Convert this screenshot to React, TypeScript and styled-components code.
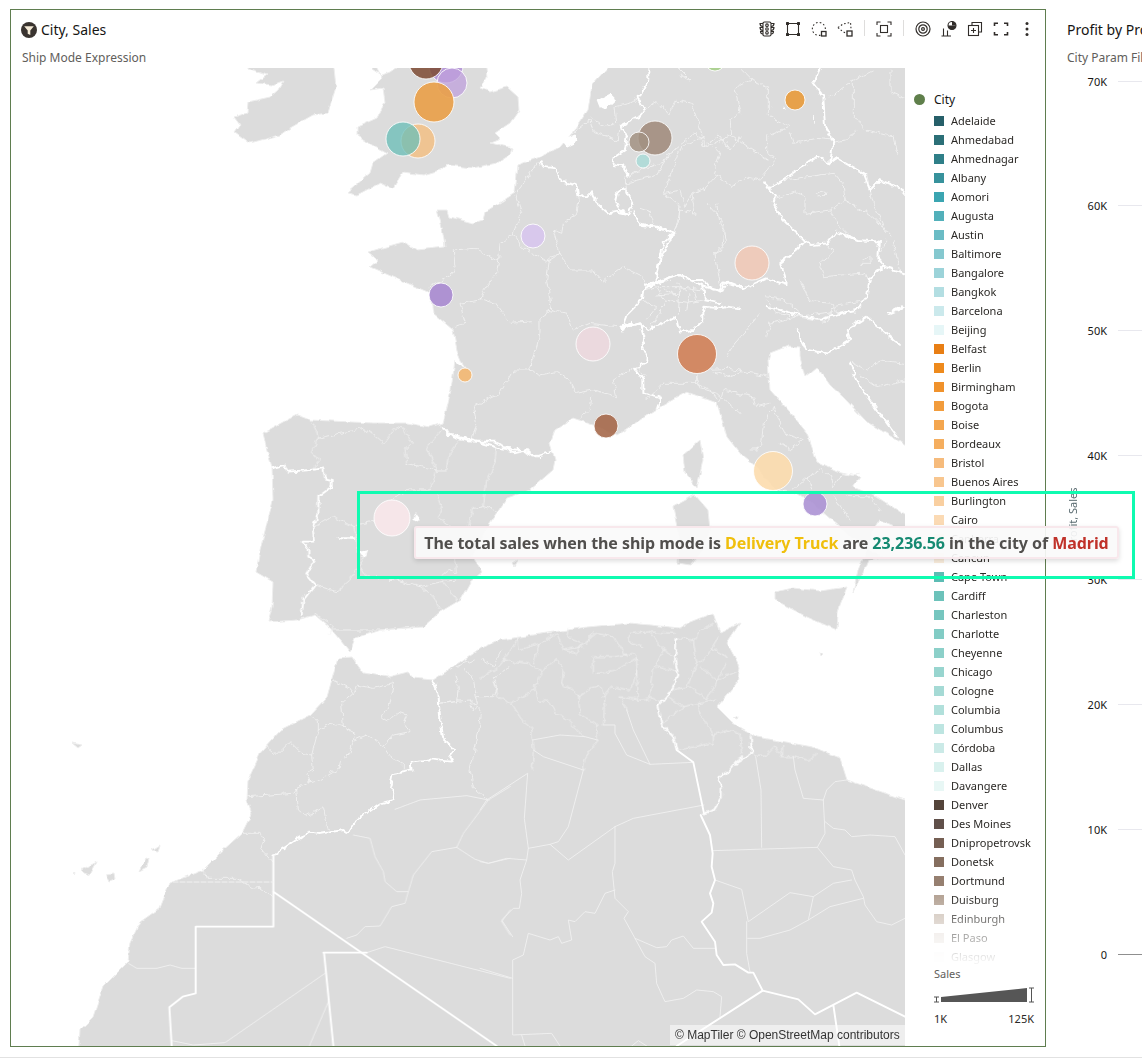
import React from "react";
import styled, { createGlobalStyle } from "styled-components";

const Global = createGlobalStyle`
  html, body { margin: 0; padding: 0; background: #fff; }
  body { font-family: "Noto Sans", "Open Sans", sans-serif; color: #161513; }
`;

const Page = styled.div`
  position: relative;
  width: 1142px;
  height: 1059px;
  overflow: hidden;
  display: flex;
  flex-direction: column;
  background: #fff;
`;
const Main = styled.main`
  flex: none;
  height: 1057px;
  display: flex;
  padding: 9px 0 0 10px;
  box-sizing: border-box;
`;
const FooterRule = styled.div`
  height: 1px;
  background: #e2e2e2;
`;
const Card = styled.section`
  flex: none;
  width: 1036px;
  height: 1038px;
  box-sizing: border-box;
  border: 1px solid #5f7d4f;
  display: flex;
  flex-direction: column;
`;
const CardHeader = styled.header`
  flex: none;
  height: 58px;
  box-sizing: border-box;
  padding: 8px 5px 0 11px;
  display: flex;
  justify-content: space-between;
  align-items: flex-start;
`;
const HeaderText = styled.div`
  display: flex;
  flex-direction: column;
  margin-top: 2px;
`;
const TitleRow = styled.div`
  display: flex;
  align-items: center;
  gap: 4px;
  height: 20px;
  margin-left: -1px;
`;
const Title = styled.h2`
  margin: 0;
  font-size: 14px;
  font-weight: 400;
  line-height: 20px;
  color: #161513;
  white-space: nowrap;
`;
const Subtitle = styled.div`
  margin-top: 9px;
  font-size: 12px;
  line-height: 17px;
  color: #615e5b;
  white-space: nowrap;
`;
const Toolbar = styled.div`
  display: flex;
  align-items: center;
  height: 20px;
`;
const Tool = styled.span`
  width: 16px;
  height: 16px;
  margin: 0 5px;
  display: block;
  color: #312d2a;
`;
const ToolDivider = styled.span`
  width: 1px;
  height: 16px;
  margin: 0 6px;
  background: #dedddc;
`;
const CardBody = styled.div`
  flex: 1;
  min-height: 0;
  display: flex;
`;
const MapPane = styled.div`
  position: relative;
  flex: none;
  width: 894px;
  height: 978px;
  overflow: hidden;
`;
const MapSvg = styled.svg`
  display: block;
  width: 894px;
  height: 978px;
`;
const Land = styled.path`
  fill: #dcdcdc;
  stroke: #eeeeee;
  stroke-width: 1;
`;
const Border = styled.path<{ $w: number; $dash?: boolean }>`
  fill: none;
  stroke: ${(p) => (p.$w > 1.2 ? "#ffffff" : "#f1f1f1")};
  stroke-width: ${(p) => p.$w}px;
  stroke-linejoin: round;
  stroke-linecap: round;
  vector-effect: non-scaling-stroke;
  stroke-dasharray: ${(p) => (p.$dash ? "5 2" : "none")};
`;
const Water = styled.path`
  fill: #ffffff;
  stroke: none;
`;
const Bubble = styled.circle`
  stroke: #ffffff;
  stroke-opacity: 0.85;
  stroke-width: 1;
`;
const Attribution = styled.div`
  position: absolute;
  right: 0;
  bottom: 1px;
  height: 20px;
  width: 235px;
  box-sizing: border-box;
  padding-left: 5px;
  background: rgba(255, 255, 255, 0.5);
  font: 12px/20px "Liberation Sans", Arial, sans-serif;
  color: #333;
  white-space: nowrap;
`;
const Legend = styled.aside`
  flex: 1;
  display: flex;
  flex-direction: column;
  min-width: 0;
`;
const LegendHead = styled.div`
  display: flex;
  align-items: center;
  gap: 9px;
  padding: 23px 0 0 9px;
  height: 17px;
  font-size: 12px;
  line-height: 17px;
  color: #161513;
`;
const LegendDot = styled.span`
  width: 11px;
  height: 11px;
  border-radius: 50%;
  background: #5f7f4b;
`;
const LegendList = styled.ul`
  list-style: none;
  margin: 3px 0 0;
  padding: 0 0 0 29px;
  height: 853px;
  overflow: hidden;
  -webkit-mask-image: linear-gradient(#000 0, #000 785px, rgba(0, 0, 0, 0.06) 850px);
  mask-image: linear-gradient(#000 0, #000 785px, rgba(0, 0, 0, 0.06) 850px);
`;
const LegendRow = styled.li`
  height: 19px;
  display: flex;
  align-items: center;
  gap: 7px;
  font-size: 11px;
  white-space: nowrap;
  color: #2b2926;
`;
const Swatch = styled.span<{ $c: string }>`
  flex: none;
  width: 10px;
  height: 10px;
  background: ${(p) => p.$c};
`;
const SizeLegend = styled.div`
  padding: 2px 11px 0 29px;
  font-size: 11px;
  line-height: 15px;
  color: #2b2926;
`;
const SizeTitle = styled.div`
  color: #615e5b;
`;
const SizeSvg = styled.svg`
  display: block;
  width: 100px;
  height: 16px;
  margin-top: 6px;
`;
const SizeLabels = styled.div`
  display: flex;
  justify-content: space-between;
  margin-top: 8px;
`;
const SidePanel = styled.section`
  flex: none;
  width: 96px;
  display: flex;
  flex-direction: column;
  padding-left: 21px;
  box-sizing: border-box;
`;
const SideHeader = styled.div`
  height: 64px;
  padding-top: 11px;
  box-sizing: border-box;
  white-space: nowrap;
`;
const Chart = styled.div`
  display: flex;
`;
const AxisTitle = styled.div`
  flex: none;
  width: 14px;
  height: 889px;
  margin-left: -2px;
  display: flex;
  align-items: center;
  justify-content: center;
  writing-mode: vertical-rl;
  transform: rotate(180deg);
  font-size: 11px;
  color: #5a6b70;
  white-space: nowrap;
`;
const AxisColumn = styled.div`
  flex: none;
  width: 63px;
  display: flex;
  flex-direction: column;
  gap: 108.72px;
`;
const Tick = styled.div`
  height: 16px;
  display: flex;
  align-items: center;
  font-size: 11px;
  color: #161513;
`;
const TickLabel = styled.span`
  width: 34px;
  margin-left: -6px;
  text-align: right;
`;
const TickLine = styled.span<{ $base?: boolean }>`
  margin-left: 11px;
  flex: 1;
  height: 1px;
  background: ${(p) => (p.$base ? "#8f8f8f" : "#e8e8ee")};
`;
const Highlight = styled.div`
  position: absolute;
  left: 357px;
  top: 491px;
  width: 778px;
  height: 88px;
  box-sizing: border-box;
  border: 3px solid #0ffbb0;
  pointer-events: none;
`;
const Tooltip = styled.div`
  position: absolute;
  left: 414px;
  top: 526px;
  width: 705px;
  height: 33px;
  box-sizing: border-box;
  display: flex;
  align-items: center;
  justify-content: center;
  background: rgba(250, 250, 250, 0.92);
  border: 2px solid #f8e8ec;
  border-radius: 3px;
  box-shadow: 0 2px 5px rgba(0, 0, 0, 0.14);
  font-size: 16px;
  font-weight: 700;
  letter-spacing: -0.06px;
  color: #514f4d;
  white-space: nowrap;
`;
const Accent = styled.span<{ $c: string }>`
  color: ${(p) => p.$c};
  white-space: pre;
`;

const legend: [string, string][] = [
  ["Adelaide", "#265f69"], ["Ahmedabad", "#2b6f77"], ["Ahmednagar", "#2f7f88"], ["Albany", "#37929c"],
  ["Aomori", "#3ba5b1"], ["Augusta", "#52b0ba"], ["Austin", "#6bbcc5"], ["Baltimore", "#85c8cf"],
  ["Bangalore", "#9cd3d9"], ["Bangkok", "#b3dee2"], ["Barcelona", "#cbe9ec"], ["Beijing", "#e6f6f7"],
  ["Belfast", "#e87e14"], ["Berlin", "#ee8a1c"], ["Birmingham", "#f0922c"], ["Bogota", "#f29c3c"],
  ["Boise", "#f4a64f"], ["Bordeaux", "#f5ae5f"], ["Bristol", "#f6bb7c"], ["Buenos Aires", "#f8c68f"],
  ["Burlington", "#f9cfa0"], ["Cairo", "#fbdab4"], ["Canberra", "#fbe4c9"], ["Cancun", "#fbeedd"],
  ["Cape Town", "#5cbcb4"], ["Cardiff", "#6cc2ba"], ["Charleston", "#76c6bf"], ["Charlotte", "#82ccc5"],
  ["Cheyenne", "#8cd0c9"], ["Chicago", "#98d5cf"], ["Cologne", "#a5dad5"], ["Columbia", "#b1e0db"],
  ["Columbus", "#bde5e1"], ["Córdoba", "#cbeae7"], ["Dallas", "#d9f1ee"], ["Davangere", "#e8f7f5"],
  ["Denver", "#54443a"], ["Des Moines", "#60504a"], ["Dnipropetrovsk", "#755f53"], ["Donetsk", "#856e5f"],
  ["Dortmund", "#967f70"], ["Duisburg", "#b5a496"], ["Edinburgh", "#cdc0b5"], ["El Paso", "#e6dfda"],
  ["Glasgow", "#f6f4f2"],
];

const bubbles: [number, number, number, string, number][] = [
  [715, 61, 10, "#a5cf86", 0.85],
  [446, 66, 17, "#b08fd6", 0.85],
  [426, 62, 17, "#7d4a32", 0.85],
  [452, 83, 15, "#bfa0dc", 0.75],
  [434, 102, 20, "#e99f47", 0.9],
  [418, 141, 17, "#f1c18a", 0.9],
  [403, 139, 17, "#68bdb7", 0.75],
  [533, 236, 12, "#d8c8ec", 1],
  [441, 295, 12, "#ae92d2", 1],
  [593, 344, 17, "#ebd9de", 1],
  [465, 375, 7, "#f1bb7c", 1],
  [697, 354, 19.5, "#d08056", 0.9],
  [606, 426, 12, "#a5684a", 0.9],
  [655, 138, 17, "#a28d7e", 0.9],
  [639, 142, 10, "#a29283", 0.85],
  [643, 161, 7, "#b2dbd8", 1],
  [795, 100, 10, "#e89a3a", 0.9],
  [752, 263, 17, "#eecbbb", 1],
  [773, 471, 19.5, "#fcdcad", 0.9],
  [815, 504, 12, "#ac92d4", 0.9],
  [392, 518, 18, "#f6e6e9", 1],
];

const IRELAND = "M247 58H333L336 87L332 100L328 113L313 115L290 128L280 135L250 143L235 132L240 125L234 117L247 113L248 102L270 97L278 90L283 81L272 85L257 83L267 75L247 68Z";
const BRITAIN = "M372 58V68L382 75L390 72L410 58H485L487 78L480 88L490 92L507 87L518 97L519 110L510 123L495 133L500 138L490 142L512 148L510 155L497 163L473 168L447 165L440 170L423 175L403 172L393 188L380 183L357 195L347 193L370 173L373 163L387 153L372 145L357 135L357 127L377 118L385 102L383 88L370 90L382 78Z";
const CONTINENT = "M612 58L607 68L592 85L588 110L573 132L560 147L540 157L518 165L515 193L485 212L483 220L473 223L450 217L448 210L437 210L442 227L445 247L417 250L403 242L368 252L378 260L370 267L400 280L430 293L433 313L453 330L457 350L465 370L455 360L451 390L445 415L443 423L430 427L407 423L373 423L310 420L297 415L283 422L263 433L267 450L272 467L273 500L260 550L256 572L273 582L272 607L268 622L297 620L315 615L330 628L350 652L355 638L380 630L423 627L440 612L460 600L470 582L482 572L472 557L490 523L507 498L530 490L553 470L555 460L550 443L555 430L573 418L593 425L617 435L660 407L687 392L717 403L727 437L743 457L753 465L777 490L797 493L820 510L840 527L862 545L872 552L883 557L868 560L863 573L853 592L858 570L868 548L872 532L880 520L892 525L915 535V515L905 515L877 497L853 487L860 477L837 472L817 462L807 433L790 412L770 390L768 360L770 353L788 346L800 347L800 357L805 377L817 367L830 385L843 397L867 422L897 440L915 452V58Z";
const CORSICA = "M700 440L703 460L697 488L685 472L683 455Z";
const SARDINIA = "M695 495L708 510L710 530L703 550L690 565L678 563L680 540L677 527L673 507Z";
const SICILY = "M775 592L793 588L820 591L847 587L840 605L838 613L837 630L807 617L775 600Z";
const AFRICA = "M78 1060L80 1030L93 1017L103 987L128 962L130 943L140 922L160 908L170 883L203 870L220 853L242 833L252 813L247 800L248 780L262 750L280 730L310 715L327 697L338 658L352 657L363 673L388 677L408 672L413 678L433 680L460 663L483 647L500 640L547 633L587 627L630 623L680 628L690 622L713 613L720 633L740 623L727 643L740 667L737 683L717 707L733 723L757 737L813 747L840 758L847 780L905 800L915 803V1060Z";
const ISLANDS = [
  "M72 743L82 745L78 748Z", "M81 870L97 862L90 875L84 873Z", "M106 875L114 874L115 880L109 882Z",
  "M139 872L146 857L149 858L147 868Z", "M152 850L160 845L158 851Z", "M73 873L75 872L74 874Z",
  "M513 563L518 560L515 566Z", "M734 718L738 716L737 719Z", "M820 653L823 655L821 657Z",
];

// each group of lines holds the coordinates of a 3x crop, placed back by a translate and a scale
const groups: { x: number; y: number; rough: boolean; thick: string[]; thin: string[]; water?: string[] }[] = [
  {
    x: 60, y: 600, rough: false,
    thick: [
      "M640 765L640 980L407 980L407 1180L368 1190L328 1222L335 1338",
      "M640 875L1310 1338",
      "M790 1058L920 1058M792 1058L820 1338",
    ],
    thin: [
      "M205 1090L230 1105L290 1105L330 1095L365 1105L405 1105",
      "M795 1120L495 1328L400 1335L335 1322",
      "M805 1205L748 1338",
      "M920 1058L975 1040L1350 1135",
      "M860 1015L890 1005L915 980L960 978L995 920L1035 910L1045 875L1010 875L975 845L970 815L945 770L930 715L880 705",
      "M1045 875L1060 825L1115 755L1190 742L1210 700L1285 600L1350 560",
      "M1190 742L1245 778L1285 790L1350 775",
      "M1005 628L1080 600L1220 587L1285 600",
      "M1325 965L1350 930M1325 965L1350 1005",
    ],
    water: [],
  },
  {
    x: 60, y: 600, rough: true,
    thick: [
      "M640 765L720 710L750 698L780 702L850 690L865 700L890 660L960 610L1000 600L1003 575L990 565L998 522L1055 512L1052 485L1110 478L1175 485L1168 470L1185 448L1150 415L1140 350L1135 280L1120 245",
    ],
    thin: [
      "M430 810L440 835L530 835L580 865L600 862L640 890",
      "M550 700L600 700L612 720L602 745L640 790",
      "M1285 600L1240 560L1230 510L1240 470L1255 400L1265 340L1250 320L1228 300L1140 310",
      "M755 345L775 365L775 390L810 370L850 380L885 400L870 460L845 480L840 505L780 540L750 545L710 565L700 580L630 585L565 590",
      "M620 440L650 465L690 425L725 460L755 465L760 510L740 520L750 545M775 390L755 465",
      "M710 565L715 630L740 650L790 620L805 690",
      "M850 380L845 310L880 280L890 255L940 265L1000 250L985 320L965 355L980 365L1010 335L1040 345L1030 370L1050 395L1000 405L970 440L920 405L885 420",
      "M820 240L870 265L880 280M985 225L1000 250M970 440L990 470L1030 490L1030 510",
      "M1140 310L1190 305L1195 260L1185 225M1228 300L1240 330L1255 315L1245 270L1240 240L1215 205M1250 290L1300 290L1310 260L1300 235L1350 200M1262 175L1300 200L1325 150M1190 200L1240 180",
    ],
  },
  {
    x: 480, y: 600, rough: false,
    thick: [
      "M590 450L640 487L672 640",
      "M662 645L690 705L698 760L695 800L705 840L690 880L700 910L695 938L665 965L705 1025L710 1065L730 1095L765 1093L805 1118L820 1118L848 1172",
      "M848 1172L590 1338M848 1172L955 1198L1005 1243L1130 1178L1275 1250M1060 1215L1078 1338",
    ],
    thin: [
      "M672 615L460 655L405 680L265 780L210 733L145 745L133 655L143 520L20 600L0 630",
      "M640 487L510 493L440 465L405 400L405 375L370 375",
      "M510 493L460 390L440 330",
      "M405 680L405 790L397 815L405 895L445 935L432 955L465 1015L530 1043L560 1040L575 1020L610 1008L640 1045L705 1045",
      "M465 1015L495 1070L525 1090L530 1150L548 1190L555 1205L610 1195L650 1170L700 1175L725 1190L720 1250",
      "M405 870L375 880L345 940L315 935L285 965L265 960L275 1020L245 1030L235 1010L210 1020L145 1000L130 1065L98 1080L98 1305L215 1300L240 1338",
      "M0 1105L98 1135M145 745L140 780M125 1305L135 1338M455 1338L475 1322L500 1338",
      "M98 1010L65 960L100 925L118 925L125 880L120 840L140 780L80 775L25 790L0 785",
      "M310 510L265 680L235 725L210 733",
      "M157 420L240 405L315 410L352 420M160 450L190 470L310 510",
      "M700 752L1012 742L1060 800L1115 810L1125 840L1150 890L1155 915L1190 965L1235 975L1275 955",
      "M845 742L843 570L827 470",
      "M1012 742L1035 700L1030 600L970 595L945 510L940 470",
      "M1030 600L1040 570L1065 545L1100 540",
      "M1035 665L1060 685L1095 690L1115 710L1170 705L1245 710L1275 765",
      "M705 840L785 868L805 965L930 878L1000 890L1060 850L1115 840",
      "M800 965L800 1060L810 1115",
      "M803 1015L840 1015L930 990L985 960L1050 920L1150 895M1000 890L985 960",
    ],
  },
  {
    x: 480, y: 600, rough: true,
    thick: [
      "M590 115L585 180L595 225L575 270L535 315L545 375L580 410L590 450",
      "M672 640L700 630L725 590L725 565L715 535L745 515L770 485L815 458L812 405",
    ],
    thin: [
      "M370 375L375 290M440 330L420 290L475 300L490 300L510 295L545 305",
      "M310 510L315 475L352 420L350 375L300 340L295 290L330 265L360 255L370 290",
      "M545 370L610 320L655 310L690 305L710 300",
      "M595 450L690 430L700 440L700 405L745 390L780 400L785 460",
      "M655 310L660 345L690 385L700 405M565 290L610 320",
      "M570 270L630 260L680 300L710 240L770 215",
      "M590 115L640 120L660 90L700 70M640 120L650 190L620 260M660 200L710 240M715 110L680 170L650 190M740 190L710 240M690 145L740 170",
      "M820 465L860 465L885 440L905 470L905 435M905 470L940 470L985 480L1010 460",
      "M0 235L50 205L70 180L115 110M70 180L140 190L185 215L165 265L95 310L50 290L45 240",
      "M185 215L230 175L250 210L245 255L275 265L295 290",
      "M165 265L175 300L210 305L225 340L260 355L315 410",
      "M95 310L130 365L155 385L157 420L160 450L157 510",
      "M350 220L400 215L470 175L470 210L460 250L450 270L395 260L370 290",
      "M340 220L340 170L400 170L460 160L475 180",
      "M310 130L350 100L400 110M180 130L230 100L250 150L310 140M400 110L440 170M110 115L115 150L180 130L160 190M310 130L285 160L250 150",
      "M450 100L510 95L550 150L520 210L510 295M470 210L475 300M580 100L510 95M445 105L450 130L490 140M550 150L585 170M530 200L590 215",
      "M265 85L260 110L310 130M340 95L320 130",
    ],
  },
  {
    x: 340, y: 60, rough: true,
    thick: [
      "M600 300L610 320L645 325L665 365L710 375L715 410L745 408L755 395L765 425L805 460L830 455L865 462L880 430L860 395L850 385L830 400L825 425L840 450L865 462",
      "M880 460L905 495L950 500L1000 518L965 590L950 650L950 670L1020 645L1050 660L1090 660L1105 680L1140 690L1150 670L1200 680",
      "M950 665L910 690L905 720L860 765L845 805L900 790L915 840L905 860L920 890L918 910L885 925L910 960L910 1000L960 1015L950 1050",
      "M845 805L900 790L925 810L1010 770L1020 815L1060 810L1090 780L1090 740L1140 745L1160 740L1200 745",
      "M1090 680L1095 720L1140 730",
      "M925 25L925 60L895 115L915 150L900 170L840 200L860 225L855 270L825 290L820 315L850 320L865 350",
      "M305 1100L330 1125L395 1140L480 1165L545 1170L600 1195",
    ],
    thin: [
      "M600 300L525 405L545 460L520 520L480 550L475 610L470 635L430 695L420 720L360 730L375 790L340 800",
      "M718 410L710 460L670 490L665 520L640 510L660 580L630 590L620 660L635 750L600 775L600 820L585 880L565 930L520 930L480 1000L400 1040L410 1090L395 1140",
      "M340 570L345 620L330 650L270 680M340 570L405 565L475 605",
      "M660 580L690 630L760 630L790 665L850 620L910 650L920 680",
      "M635 750L680 760L700 810L750 790L830 800",
      "M420 715L465 730L510 790L580 785",
      "M565 930L600 945L650 935L690 960L710 1000L760 990L830 1010L820 960L870 930",
      "M755 1010L750 1050L720 1075M520 520L545 560L620 605L660 580",
      "M910 690L950 680L1020 680L1090 690M950 680L975 720L960 760L930 800M1020 680L1015 760M975 720L1040 730L1090 720M1010 670L1050 700L1040 750M905 720L950 740L920 780M1000 700L975 690M950 705L1015 700M1060 680L1070 720",
      "M1120 935L1170 950L1200 935M1070 945L1080 985L1130 1000L1200 1060",
      "M855 350L860 395M865 350L900 330L975 305L990 280L1070 215L1090 260L1135 225L1170 270L1200 230",
      "M755 175L790 200L830 190L825 140L870 130L895 115M700 220L750 180L760 215L835 240L840 200",
      "M855 370L950 345L975 305M975 400L1020 390L1035 440L1060 400M1020 440L1015 490L1000 518M1100 430L1145 480L1160 545L1125 580",
    ],
    water: ["M770 120L810 100L828 118L795 150L780 145Z", "M665 240L705 222L712 245L680 260Z", "M840 800L875 782L880 795L845 815Z"],
  },
  {
    x: 640, y: 60, rough: true,
    thick: [
      "M540 25L520 70L550 110L555 200L580 245L570 310",
      "M570 310L530 290L430 360L385 385L375 370L405 410L400 430L430 480L495 545L470 570L420 610L440 675L380 655L310 685L260 665L245 695L190 680L120 645L60 665L15 675",
      "M495 545L515 555L560 550L590 515L650 540L720 545L715 590L730 620L690 655L680 710L650 750L600 760L540 780L380 740",
      "M570 310L590 295L670 340L690 390L720 360L780 385L795 405",
      "M100 520L70 550L50 640L50 660M0 490L40 500L100 520M730 620L795 640",
    ],
    thin: [
      "M300 25L335 60L285 85L300 160L270 180L275 225L215 255L195 260L185 220L155 130L110 120L85 165L55 125L0 160",
      "M335 60L385 80L385 165L450 200L380 230L380 280L410 295L360 355",
      "M275 225L330 265L385 300M215 255L240 280L220 340L275 380L320 350L360 360",
      "M230 345L195 385L155 400L165 460L120 450L110 430L70 400L125 260L190 230",
      "M450 220L460 250L530 235L580 240M115 25L150 60L120 45",
      "M430 360L540 345L580 340L610 375L615 420L570 450L495 460L495 410L470 395L405 415",
      "M570 450L600 500L620 520M615 420L700 470L750 525M680 345L700 430L735 510M530 400L550 390L560 400L545 415Z",
      "M540 610L580 575L560 550M540 610L550 650L660 640L690 655M480 660L510 725L580 730L590 760M665 600L690 590L690 610L665 610",
      "M640 60L640 170L680 210L760 230L770 280M700 30L650 55L570 110M750 30L750 95L795 115M650 210L620 240L585 245",
      "M120 450L105 520M230 430L240 490L250 520L245 570L225 580L240 670M0 445L30 455L40 490",
      "M740 540L715 590M760 545L780 640M380 710L435 720L480 760",
    ],
    water: ["M394 140L401 141L399 146Z", "M432 138L437 150L430 148Z", "M522 172L525 172L524 188L522 188Z", "M740 760L790 735L795 745L745 765Z"],
  },
  {
    x: 240, y: 400, rough: true,
    thick: [
      "M620 90L630 105L690 125L770 125L820 160L860 150L880 170L935 155",
      "M95 205L130 195L145 215L210 210L250 205L255 235L275 240L275 260L235 290L235 345L220 380L225 425L185 425L205 450L205 470L225 480L200 525L225 555L190 600L185 645",
    ],
    thin: [
      "M215 65L230 95L235 115L215 155L240 180L220 205",
      "M235 115L300 100L370 85L400 105L430 130L470 80L490 85L500 105L520 130L495 150L500 190L590 210L580 240L570 270L510 270L450 300L410 360L370 370L340 380L275 350L225 380",
      "M610 80L560 140L590 210L620 210L630 160L660 120L690 125",
      "M770 125L765 190L740 240L730 320L770 330",
      "M590 280L605 320L595 350L630 380M730 320L700 325L685 380L640 460L650 520L625 510L600 530L650 600",
      "M340 380L350 420L355 470L375 470L355 500L330 540L290 575L225 555",
      "M540 560L580 590L600 630M540 560L605 545L650 540M225 640L280 680L270 700M280 690L430 690L530 680",
      "M360 500L380 530L470 540L540 560",
    ],
    water: ["M292 412L345 412L345 420L300 418Z", "M358 455L385 450L378 470L365 465Z", "M525 342L530 340L542 358L525 368L520 360Z"],
  },
  {
    x: 620, y: 280, rough: true,
    thick: [
      "M530 150L560 210L625 220L690 180L680 150L740 110L840 195",
      "M690 250L720 320L830 470",
    ],
    thin: [
      "M0 285L50 260L75 290M130 310L230 310L270 330L300 370L310 330L400 350L410 380L450 370",
      "M230 285L230 310M230 270L330 265L450 290M80 360L130 310",
      "M440 170L450 130L530 110L640 95M460 380L430 430L425 490L410 510L390 510M460 380L490 460L550 480L510 510L480 490",
      "M520 630L565 590L600 570L635 590L640 620L660 590L715 580M565 590L575 630M640 650L690 720M680 650L750 650L780 690",
      "M700 250L740 270L780 240L855 250M720 285L770 320L855 300M440 60L470 100L620 125L640 80L740 60",
      "M340 195L380 150L420 100M320 230L340 195",
    ],
  },
];

const Filter = () => (
  <svg width="16" height="16" viewBox="0 0 16 16">
    <circle cx="8" cy="8" r="8" fill="#3a3430" />
    <path d="M3.2 4.2H12.8L9.3 8.4V13L6.7 11.8V8.4Z" fill="#f6ecd8" />
  </svg>
);

const ic = { fill: "none", stroke: "currentColor", strokeWidth: 1.1 } as const;

const icons: React.ReactNode[] = [
  <svg key="a" viewBox="0 0 16 16" {...ic}>
    <rect x="4" y="1" width="8" height="14" rx="1.5" />
    <circle cx="8" cy="4.2" r="1.3" /><circle cx="8" cy="8" r="1.3" /><circle cx="8" cy="11.8" r="1.3" />
    <path d="M4 2.5H1C1 4.5 2 5.5 4 5.5M4 6.5H1C1 8.5 2 9.5 4 9.5M4 10.5H1.5C1.5 12 2.5 13 4 13M12 2.5H15C15 4.5 14 5.5 12 5.5M12 6.5H15C15 8.5 14 9.5 12 9.5M12 10.5H14.5C14.5 12 13.5 13 12 13" />
  </svg>,
  <svg key="b" viewBox="0 0 16 16" {...ic}>
    <path d="M3 2.5H13M3 13.5H13M2.5 3V13M13.5 3V13" />
    <rect x="1" y="1" width="3" height="3" fill="currentColor" stroke="none" rx=".5" />
    <rect x="12" y="1" width="3" height="3" fill="currentColor" stroke="none" rx=".5" />
    <rect x="1" y="12" width="3" height="3" fill="currentColor" stroke="none" rx=".5" />
    <rect x="12" y="12" width="3" height="3" fill="currentColor" stroke="none" rx=".5" />
  </svg>,
  <svg key="c" viewBox="0 0 16 16" {...ic}>
    <path d="M9.5 14.2A6.5 6.5 0 1 1 14.3 8.8" strokeDasharray="1.6 2.2" />
    <rect x="10.5" y="10.5" width="4.5" height="4.5" strokeWidth="1.3" />
  </svg>,
  <svg key="d" viewBox="0 0 16 16" {...ic}>
    <path d="M1 6.5L6 3L13.5 1.5L14 7.5M1 6.5L5 10L8.5 12" strokeDasharray="1.6 2" />
    <rect x="10" y="10" width="5" height="5" strokeWidth="1.3" />
  </svg>,
  <svg key="e" viewBox="0 0 16 16" {...ic}>
    <path d="M1 4V1H4.5M11.5 1H15V4M15 12V15H11.5M4.5 15H1V12" />
    <rect x="4.5" y="4.5" width="7" height="7" />
  </svg>,
  <svg key="f" viewBox="0 0 16 16" {...ic} strokeWidth={1.2}>
    <circle cx="8" cy="8" r="7" /><circle cx="8" cy="8" r="4.2" /><circle cx="8" cy="8" r="1.4" />
  </svg>,
  <svg key="g" viewBox="0 0 16 16" {...ic}>
    <path d="M0.5 15H10M2.5 15V7.5M6.5 15V9.5" />
    <circle cx="11" cy="4.5" r="4" />
    <path d="M11 4.5V0.5A4 4 0 0 1 15 4.5Z" fill="currentColor" stroke="none" />
    <path d="M11 4.5L7 4.5A4 4 0 0 0 11 8.5A4 4 0 0 0 15 4.5Z" fill="currentColor" stroke="none" />
  </svg>,
  <svg key="h" viewBox="0 0 16 16" {...ic}>
    <path d="M5 4.5V1.5H14.5V11H11.5" />
    <rect x="1.5" y="4.5" width="10" height="10" />
    <path d="M6.5 7V12M4 9.5H9" />
  </svg>,
  <svg key="i" viewBox="0 0 16 16" {...ic} strokeWidth={1.6}>
    <path d="M1.5 5V2.2H5M11 2.2H14.5V5M14.5 11V13.8H11M5 13.8H1.5V11" />
  </svg>,
  <svg key="j" viewBox="0 0 16 16" fill="currentColor">
    <circle cx="8" cy="2.5" r="1.5" /><circle cx="8" cy="8" r="1.5" /><circle cx="8" cy="13.5" r="1.5" />
  </svg>,
];

const ticks = ["70K", "60K", "50K", "40K", "30K", "20K", "10K", "0"];

export default function App() {
  return (
    <Page>
      <Global />
      <Main>
        <Card>
          <CardHeader>
            <HeaderText>
              <TitleRow>
                <Filter />
                <Title>City, Sales</Title>
              </TitleRow>
              <Subtitle>Ship Mode Expression</Subtitle>
            </HeaderText>
            <Toolbar>
              {icons.map((icon, i) => (
                <React.Fragment key={i}>
                  <Tool>{icon}</Tool>
                  {(i === 3 || i === 4) && <ToolDivider />}
                </React.Fragment>
              ))}
            </Toolbar>
          </CardHeader>
          <CardBody>
            <MapPane>
              <MapSvg viewBox="11 68 894 978">
                <defs>
                  <filter id="coast" filterUnits="userSpaceOnUse" x="0" y="40" width="940" height="1040">
                    <feTurbulence type="fractalNoise" baseFrequency="0.11" numOctaves="2" seed="4" result="n" />
                    <feDisplacementMap in="SourceGraphic" in2="n" scale="4" xChannelSelector="R" yChannelSelector="G" />
                  </filter>
                  <filter id="lines" filterUnits="userSpaceOnUse" x="0" y="40" width="940" height="1040">
                    <feTurbulence type="fractalNoise" baseFrequency="0.16" numOctaves="2" seed="9" result="n" />
                    <feDisplacementMap in="SourceGraphic" in2="n" scale="6" xChannelSelector="R" yChannelSelector="G" />
                  </filter>
                </defs>
                <g filter="url(#coast)">
                  <Land d={IRELAND} />
                  <Land d={BRITAIN} />
                  <Land d={CONTINENT} />
                  <Land d={CORSICA} />
                  <Land d={SARDINIA} />
                  <Land d={SICILY} />
                  <Land d={AFRICA} />
                  {ISLANDS.map((d) => <Land key={d} d={d} />)}
                </g>
                <g filter="url(#lines)">
                  {groups.filter((g) => g.rough).map((g) => (
                    <g key={`${g.x}-${g.y}`} transform={`translate(${g.x} ${g.y}) scale(${1 / 3})`}>
                      {g.thin.map((d) => <Border key={d} d={d} $w={0.9} />)}
                      {g.thick.map((d) => <Border key={d} d={d} $w={1.9} />)}
                      {g.water?.map((d) => <Water key={d} d={d} />)}
                    </g>
                  ))}
                </g>
                {groups.filter((g) => !g.rough).map((g) => (
                  <g key={`${g.x}-${g.y}`} transform={`translate(${g.x} ${g.y}) scale(${1 / 3})`}>
                    {g.thin.map((d) => <Border key={d} d={d} $w={0.9} />)}
                    {g.thick.map((d) => <Border key={d} d={d} $w={1.9} />)}
                  </g>
                ))}
                <Border d="M173 882L273 882" $w={1} $dash />
                {bubbles.map(([x, y, r, c, o]) => (
                  <Bubble key={`${x}-${y}`} cx={x} cy={y} r={r} fill={c} fillOpacity={o} />
                ))}
              </MapSvg>
              <Attribution>© MapTiler © OpenStreetMap contributors</Attribution>
            </MapPane>
            <Legend>
              <LegendHead>
                <LegendDot />
                City
              </LegendHead>
              <LegendList>
                {legend.map(([name, c]) => (
                  <LegendRow key={name}>
                    <Swatch $c={c} />
                    {name}
                  </LegendRow>
                ))}
              </LegendList>
              <SizeLegend>
                <SizeTitle>Sales</SizeTitle>
                <SizeSvg viewBox="0 0 100 16">
                  <path d="M0 10H5M0 15H5M2.5 10V15" stroke="#555" fill="none" />
                  <path d="M7 10L93 1V15H7Z" fill="#565656" />
                  <path d="M95 1H100M95 15H100M97.5 1V15" stroke="#555" fill="none" />
                </SizeSvg>
                <SizeLabels>
                  <span>1K</span>
                  <span>125K</span>
                </SizeLabels>
              </SizeLegend>
            </Legend>
          </CardBody>
        </Card>
        <SidePanel>
          <SideHeader>
            <Title>Profit by Product</Title>
            <Subtitle>City Param Filter</Subtitle>
          </SideHeader>
          <Chart>
            <AxisTitle>Profit, Sales</AxisTitle>
            <AxisColumn>
              {ticks.map((t) => (
                <Tick key={t}>
                  <TickLabel>{t}</TickLabel>
                  <TickLine $base={t === "0"} />
                </Tick>
              ))}
            </AxisColumn>
          </Chart>
        </SidePanel>
      </Main>
      <FooterRule />
      <Highlight />
      <Tooltip>
        The total sales when the ship mode is&nbsp;
        <Accent $c="#f0bf0c">Delivery Truck</Accent>
        &nbsp;are&nbsp;
        <Accent $c="#168a72">23,236.56</Accent>
        &nbsp;in the city of&nbsp;
        <Accent $c="#c0322a">Madrid</Accent>
      </Tooltip>
    </Page>
  );
}
